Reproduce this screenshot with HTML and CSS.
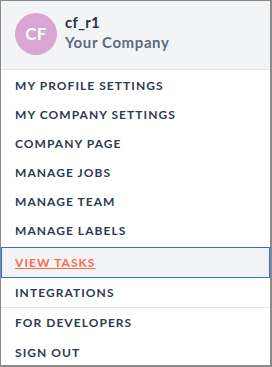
FILE: index.html
```html
<!DOCTYPE html>
<html>
<head>
<meta charset="utf-8">
<link rel="stylesheet" href="styles.css">
</head>
<body>
<div class="menu">
  <div class="header">
    <div class="avatar">CF</div>
    <div class="who">
      <div class="name">cf_r1</div>
      <div class="company">Your Company</div>
    </div>
  </div>
  <ul class="items">
    <li class="item">MY PROFILE SETTINGS</li>
    <li class="item">MY COMPANY SETTINGS</li>
    <li class="item">COMPANY PAGE</li>
    <li class="item">MANAGE JOBS</li>
    <li class="item">MANAGE TEAM</li>
    <li class="item">MANAGE LABELS</li>
    <li class="item active"><span class="link">VIEW TASKS</span></li>
    <li class="item">INTEGRATIONS</li>
    <li class="item sep">FOR DEVELOPERS</li>
    <li class="item last">SIGN OUT</li>
  </ul>
</div>
</body>
</html>
```
FILE: styles.css
```css
html, body {
  margin: 0;
  padding: 0;
  background: #ffffff;
}
.menu {
  box-sizing: border-box;
  width: 272px;
  height: 367px;
  border: 1px solid #8a8a8a;
  border-right-width: 2px;
  border-bottom-width: 2px;
  background: #ffffff;
  font-family: "Lato", "Liberation Sans", sans-serif;
  overflow: hidden;
}
.header {
  box-sizing: border-box;
  display: flex;
  align-items: center;
  gap: 8px;
  height: 69px;
  padding-left: 14px;
  padding-bottom: 3px;
  background: #f3f4f6;
  border-bottom: 1px solid #e2e4e8;
}
.avatar {
  width: 42px;
  height: 42px;
  border-radius: 50%;
  background: #d8a5d5;
  color: #ffffff;
  display: flex;
  align-items: center;
  justify-content: center;
  font-weight: 700;
  font-size: 17px;
  letter-spacing: 0.3px;
}
.who {
  display: flex;
  flex-direction: column;
  padding-bottom: 4px;
}
.name {
  font-weight: 700;
  font-size: 15px;
  line-height: 20px;
  color: #2b3445;
  letter-spacing: 0.2px;
}
.company {
  font-weight: 700;
  font-size: 15px;
  line-height: 20px;
  color: #5b6b84;
  letter-spacing: 0.6px;
}
.items {
  list-style: none;
  margin: 0;
  padding: 1px 0 0 0;
}
.item {
  height: 29px;
  line-height: 29px;
  padding-left: 14px;
  font-size: 12px;
  font-weight: 700;
  letter-spacing: 1.05px;
  color: #2f3a4d;
}
.item.active {
  height: 29px;
  margin-top: 2px;
  line-height: 29px;
  border: 1px solid #2f6fe4;
  padding-left: 13px;
  background: #f3f4f6;
}
.link {
  color: #ff6a48;
  text-decoration: underline;
  text-underline-offset: 1px;
}
.item.sep {
  border-top: 1px solid #e2e4e8;
}
.item.last {
  margin-top: 1px;
}
```
